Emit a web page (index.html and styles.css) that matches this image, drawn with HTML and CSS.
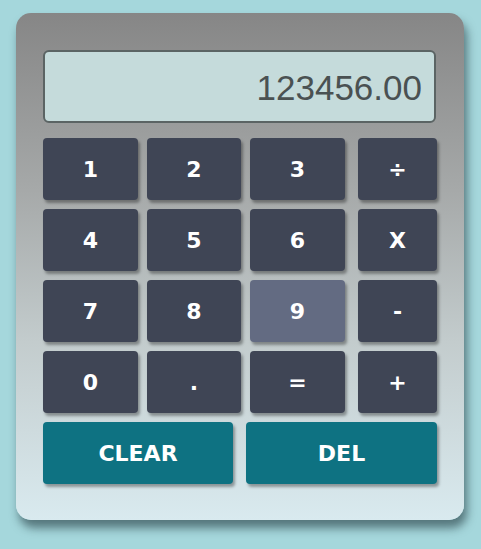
FILE: index.html
```html
<!DOCTYPE html>
<html>
<head>
<meta charset="utf-8">
<link rel="stylesheet" href="styles.css">
</head>
<body>
<div class="calc">
  <div class="display">123456.00</div>
  <div class="keys">
    <button class="key">1</button>
    <button class="key">2</button>
    <button class="key">3</button>
    <button class="key op">÷</button>
    <button class="key">4</button>
    <button class="key">5</button>
    <button class="key">6</button>
    <button class="key op">X</button>
    <button class="key">7</button>
    <button class="key">8</button>
    <button class="key hover">9</button>
    <button class="key op">-</button>
    <button class="key">0</button>
    <button class="key">.</button>
    <button class="key">=</button>
    <button class="key op">+</button>
  </div>
  <div class="actions">
    <button class="key action">CLEAR</button>
    <button class="key action">DEL</button>
  </div>
</div>
</body>
</html>
```
FILE: styles.css
```css
html, body {
  margin: 0;
  padding: 0;
  background: #a5d7dc;
  width: 481px;
  height: 549px;
  overflow: hidden;
}
.calc {
  box-sizing: border-box;
  margin: 13px 0 0 16px;
  width: 448px;
  height: 507px;
  padding: 37px 27px 0 27px;
  border-radius: 15px;
  background: linear-gradient(to bottom, #868686 0%, #a6a9a9 35%, #c3cccd 65%, #d9eaef 100%);
  box-shadow: 3px 8px 10px rgba(20, 40, 45, 0.55);
}
.display {
  box-sizing: border-box;
  width: 393px;
  height: 73px;
  border: 2px solid #5b6464;
  border-radius: 6px;
  background: #c5dbdb;
  color: #4a5152;
  font-family: "Liberation Sans", Arial, sans-serif;
  font-size: 35px;
  line-height: 71px;
  text-align: right;
  padding-right: 12px;
}
.keys {
  margin-top: 15px;
  display: grid;
  grid-template-columns: 95px 94px 95px 83px;
  grid-auto-rows: 62px;
  column-gap: 9px;
  row-gap: 9px;
}
.key {
  border: none;
  margin: 0;
  padding: 0;
  border-radius: 4px;
  background: #3f4555;
  color: #ffffff;
  font-family: "DejaVu Sans", Verdana, sans-serif;
  font-weight: bold;
  font-size: 22px;
  box-shadow: 2px 3px 3px rgba(0, 0, 0, 0.35);
}
.op {
  width: 79px;
  justify-self: end;
}
.hover {
  background: #636b82;
}
.actions {
  margin-top: 9px;
  display: grid;
  grid-template-columns: 190px 191px;
  column-gap: 13px;
  height: 62px;
}
.action {
  background: #0e7282;
}
```
